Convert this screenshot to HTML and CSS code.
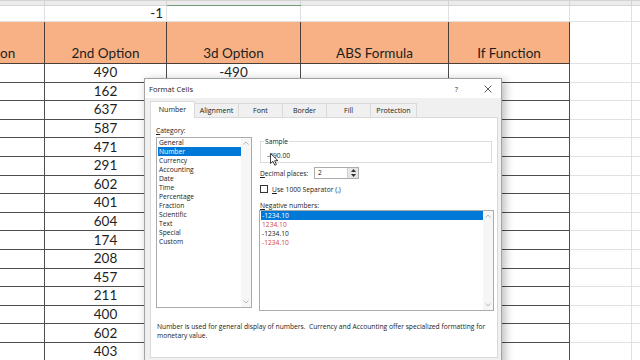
FILE: index.html
```html
<!DOCTYPE html>
<html lang="en">
<head>
    <meta charset="UTF-8">
    <meta name="viewport" content="width=device-width, initial-scale=1.0">
    <title>Format Cells</title>
    <link rel="stylesheet" href="styles.css">
</head>
<body>
    <table class="sheet">
        <colgroup>
            <col class="col-a"><col class="col-b"><col class="col-c"><col class="col-d"><col class="col-e"><col class="col-f"><col class="col-g">
        </colgroup>
        <tr class="row-cut"><td></td><td></td><td class="active-top"></td><td></td><td></td><td></td><td></td></tr>
        <tr class="row-total"><td></td><td class="right">-1</td><td></td><td></td><td></td><td></td><td></td></tr>
        <tr class="row-head"><td>1st Option</td><td>2nd Option</td><td>3d Option</td><td>ABS Formula</td><td>If Function</td><td></td><td></td></tr>
        <tr class="row-data"><td></td><td>490</td><td>-490</td><td></td><td></td><td></td><td></td></tr>
        <tr class="row-data"><td></td><td>162</td><td></td><td></td><td></td><td></td><td></td></tr>
        <tr class="row-data"><td></td><td>637</td><td></td><td></td><td></td><td></td><td></td></tr>
        <tr class="row-data"><td></td><td>587</td><td></td><td></td><td></td><td></td><td></td></tr>
        <tr class="row-data"><td></td><td>471</td><td></td><td></td><td></td><td></td><td></td></tr>
        <tr class="row-data"><td></td><td>291</td><td></td><td></td><td></td><td></td><td></td></tr>
        <tr class="row-data"><td></td><td>602</td><td></td><td></td><td></td><td></td><td></td></tr>
        <tr class="row-data"><td></td><td>401</td><td></td><td></td><td></td><td></td><td></td></tr>
        <tr class="row-data"><td></td><td>604</td><td></td><td></td><td></td><td></td><td></td></tr>
        <tr class="row-data"><td></td><td>174</td><td></td><td></td><td></td><td></td><td></td></tr>
        <tr class="row-data"><td></td><td>208</td><td></td><td></td><td></td><td></td><td></td></tr>
        <tr class="row-data"><td></td><td>457</td><td></td><td></td><td></td><td></td><td></td></tr>
        <tr class="row-data"><td></td><td>211</td><td></td><td></td><td></td><td></td><td></td></tr>
        <tr class="row-data"><td></td><td>400</td><td></td><td></td><td></td><td></td><td></td></tr>
        <tr class="row-data"><td></td><td>602</td><td></td><td></td><td></td><td></td><td></td></tr>
        <tr class="row-data"><td></td><td>403</td><td></td><td></td><td></td><td></td><td></td></tr>
    </table>

    <div class="dialog">
        <div class="titlebar">
            <span class="title">Format Cells</span>
            <span class="help">?</span>
            <svg class="close" width="8" height="8" viewBox="0 0 8 8">
                <path d="M0.5 0.5 L7.5 7.5 M7.5 0.5 L0.5 7.5" stroke="#333" stroke-width="0.8" fill="none"/>
            </svg>
        </div>
        <div class="tabs">
            <span class="tab active">Number</span>
            <span class="tab">Alignment</span>
            <span class="tab">Font</span>
            <span class="tab">Border</span>
            <span class="tab">Fill</span>
            <span class="tab wide">Protection</span>
        </div>
        <div class="panel">
            <div class="columns">
                <div class="cat-col">
                    <div class="label"><u>C</u>ategory:</div>
                    <div class="listbox cat-list">
                        <ul class="items">
                            <li>General</li>
                            <li class="sel">Number</li>
                            <li>Currency</li>
                            <li>Accounting</li>
                            <li>Date</li>
                            <li>Time</li>
                            <li>Percentage</li>
                            <li>Fraction</li>
                            <li>Scientific</li>
                            <li>Text</li>
                            <li>Special</li>
                            <li>Custom</li>
                        </ul>
                        <div class="scroll">
                            <svg width="6" height="4" viewBox="0 0 6 4"><path d="M0.5 3.5 L3 1 L5.5 3.5" stroke="#aaa" stroke-width="0.8" fill="none"/></svg>
                            <svg width="6" height="4" viewBox="0 0 6 4"><path d="M0.5 0.5 L3 3 L5.5 0.5" stroke="#aaa" stroke-width="0.8" fill="none"/></svg>
                        </div>
                    </div>
                </div>
                <div class="opts">
                    <fieldset class="sample">
                        <legend>Sample</legend>
                        <div class="sample-val">-490.00</div>
                    </fieldset>
                    <div class="decimals">
                        <span class="dec-label"><u>D</u>ecimal places:</span>
                        <div class="spin">
                            <span class="spin-val">2</span>
                            <div class="spin-btns">
                                <svg width="5" height="3" viewBox="0 0 5 3"><path d="M0 3 L2.5 0 L5 3 Z" fill="#333"/></svg>
                                <svg width="5" height="3" viewBox="0 0 5 3"><path d="M0 0 L2.5 3 L5 0 Z" fill="#333"/></svg>
                            </div>
                        </div>
                    </div>
                    <div class="sep">
                        <span class="check"></span>
                        <span><u>U</u>se 1000 Separator (,)</span>
                    </div>
                    <div class="label neg-label"><u>N</u>egative numbers:</div>
                    <div class="listbox neg-list">
                        <ul class="items">
                            <li class="sel">-1234.10</li>
                            <li class="red">1234.10</li>
                            <li>-1234.10</li>
                            <li class="red">-1234.10</li>
                        </ul>
                        <div class="scroll">
                            <svg width="6" height="4" viewBox="0 0 6 4"><path d="M0.5 3.5 L3 1 L5.5 3.5" stroke="#aaa" stroke-width="0.8" fill="none"/></svg>
                            <svg width="6" height="4" viewBox="0 0 6 4"><path d="M0.5 0.5 L3 3 L5.5 0.5" stroke="#aaa" stroke-width="0.8" fill="none"/></svg>
                        </div>
                    </div>
                </div>
            </div>
            <p class="desc">Number is used for general display of numbers.&nbsp; Currency and Accounting offer specialized formatting for<br>monetary value.</p>
        </div>
    </div>

    <svg class="cursor" width="9" height="13" viewBox="0 0 9 13">
        <path d="M0.5 0.5 L0.5 10.5 L3 8.3 L4.8 12.2 L6.4 11.5 L4.7 7.7 L8 7.7 Z" fill="#fff" stroke="#111" stroke-width="0.8"/>
    </svg>
</body>
</html>
```

FILE: styles.css
```css
body {
    margin: 0;
    width: 640px;
    height: 360px;
    overflow: hidden;
    position: relative;
    background: #fff;
}

/* spreadsheet behind the dialog */
.sheet {
    border-collapse: collapse;
    table-layout: fixed;
    width: 809px;
    margin-left: -78px;
    font-family: Lato, "Liberation Sans", sans-serif;
    font-size: 13.5px;
    color: #1e1e1e;
}
.col-a { width: 122px; }
.col-b { width: 122px; }
.col-c { width: 134px; }
.col-d { width: 148px; }
.col-e { width: 121px; }
.col-f { width: 62px; }
.col-g { width: 100px; }
.sheet td {
    padding: 0;
    border: 1px solid #e1e1e1;
    text-align: center;
    white-space: nowrap;
    overflow: hidden;
    height: 18px;
    line-height: 18px;
}
.row-cut td {
    height: 4px;
    line-height: 4px;
    background: #ececec;
    border-color: #d4d4d4;
}
.row-cut td.active-top {
    border-bottom: 1px solid #6f9a78;
}
.row-total td {
    height: 15px;
    line-height: 15px;
}
.sheet td.right {
    text-align: right;
    padding-right: 3px;
}
.row-head td {
    height: 41px;
    line-height: 20px;
    vertical-align: bottom;
}
.row-head td:nth-child(-n+5) {
    background: #f7b184;
    border: 1px solid #4a3e36;
}
.row-data td {
    height: 17.6px;
    line-height: 17px;
}
.row-data td:nth-child(-n+5) {
    border-color: #4d4d4d;
}

/* Format Cells dialog */
.dialog {
    position: absolute;
    left: 144px;
    top: 78px;
    width: 358px;
    height: 290px;
    box-sizing: border-box;
    border: 1px solid #a3a3a3;
    background: #f0f0f0;
    box-shadow: 3px 2px 9px rgba(0, 0, 0, 0.28);
    font-family: "Open Sans", "Noto Sans", sans-serif;
    font-size: 6.7px;
    color: #1a1a1a;
    display: flex;
    flex-direction: column;
}
.titlebar {
    height: 19px;
    background: #fff;
    display: flex;
    align-items: center;
    padding: 0 9px 0 4px;
    font-size: 7.6px;
}
.title {
    flex: 1;
}
.help {
    margin-right: 26px;
    font-size: 7.6px;
    color: #333;
}
.tabs {
    display: flex;
    align-items: flex-end;
    height: 19px;
    padding-left: 5px;
    position: relative;
    z-index: 1;
    font-size: 7.1px;
}
.tab {
    width: 43px;
    height: 13px;
    line-height: 13px;
    text-align: center;
    border: 1px solid #dadada;
    border-bottom: none;
    margin-right: -1px;
    background: #f0f0f0;
}
.tab.wide {
    width: 45px;
}
.tab.active {
    height: 16px;
    line-height: 15px;
    margin-bottom: -1px;
    background: #fff;
}
.panel {
    margin-left: 5px;
    width: 348px;
    height: 241px;
    box-sizing: border-box;
    border: 1px solid #d9d9d9;
    background: #fff;
}
.columns {
    display: flex;
    gap: 7px;
    padding-left: 5px;
}
.cat-col {
    width: 96px;
    padding-top: 7.5px;
}
.label {
    line-height: 9px;
    height: 9px;
}
.listbox {
    display: flex;
    border: 1px solid #ababab;
    box-sizing: border-box;
    background: #fff;
}
.cat-list {
    margin-top: 2.5px;
    height: 171px;
}
.items {
    list-style: none;
    margin: 0;
    padding: 0 0 0 1px;
    flex: 1;
}
.items li {
    height: 9px;
    line-height: 9px;
    padding-left: 1px;
}
.items li.sel {
    background: #0078d7;
    color: #fff;
}
.items li.red {
    color: #d4473d;
}
.scroll {
    width: 10px;
    background: #f6f6f6;
    display: flex;
    flex-direction: column;
    justify-content: space-between;
    align-items: center;
    padding: 3px 0;
}
.opts {
    width: 235px;
    padding-top: 18.5px;
}
.sample {
    margin: 0 0 0 1px;
    padding: 0 6px 2px;
    border: 1px solid #dcdcdc;
    width: 232px;
    box-sizing: border-box;
}
.sample legend {
    padding: 0 1px;
    margin-left: -3px;
    line-height: 9px;
}
.sample-val {
    margin-top: 5px;
    line-height: 9px;
}
.decimals {
    display: flex;
    align-items: center;
    margin-top: 4.5px;
    padding-left: 1px;
    height: 12px;
}
.dec-label {
    width: 54px;
}
.spin {
    display: flex;
    width: 45px;
    height: 12px;
    box-sizing: border-box;
    border: 1px solid #ababab;
}
.spin-val {
    flex: 1;
    line-height: 10px;
    padding-left: 3px;
}
.spin-btns {
    width: 10px;
    background: #e6e6e6;
    border-left: 1px solid #cfcfcf;
    display: flex;
    flex-direction: column;
    justify-content: space-around;
    align-items: center;
}
.sep {
    display: flex;
    align-items: center;
    gap: 4px;
    margin-top: 6px;
    padding-left: 1px;
    height: 8px;
}
.check {
    width: 8px;
    height: 8px;
    box-sizing: border-box;
    border: 1px solid #333;
}
.neg-label {
    margin-top: 8px;
    padding-left: 1px;
}
.neg-list {
    height: 101px;
}
.desc {
    margin: 10.5px 0 0 6px;
    line-height: 9px;
    white-space: nowrap;
}

.cursor {
    position: absolute;
    left: 270px;
    top: 153px;
}
```
